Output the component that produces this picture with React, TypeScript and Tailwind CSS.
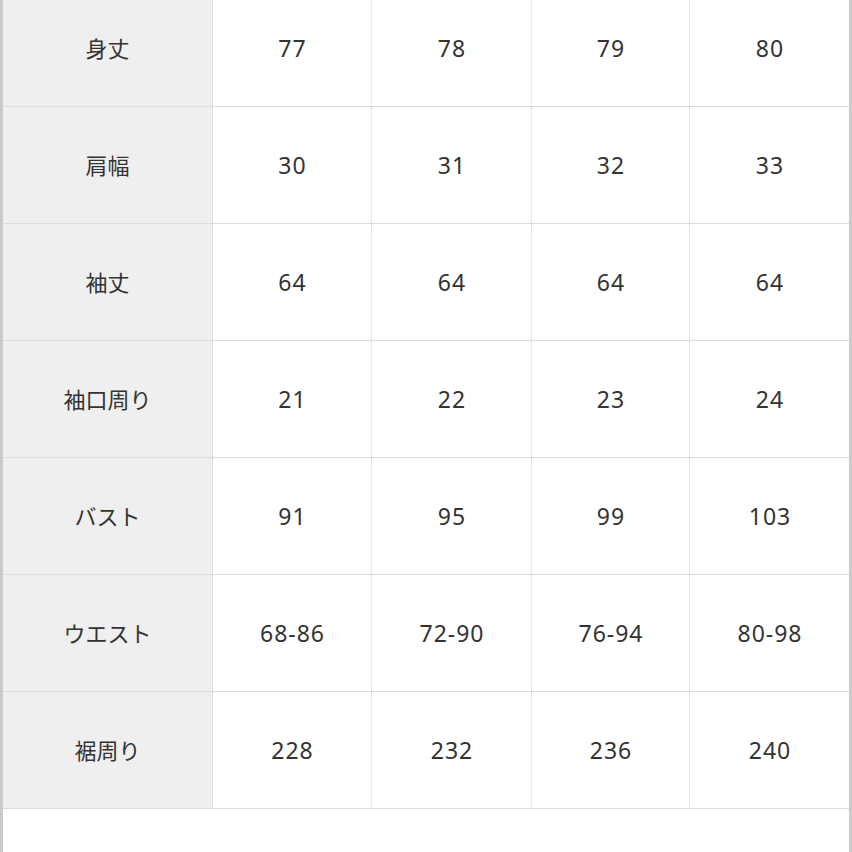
import React from "react";

const rows: [string, string[]][] = [
  ["身丈", ["77", "78", "79", "80"]],
  ["肩幅", ["30", "31", "32", "33"]],
  ["袖丈", ["64", "64", "64", "64"]],
  ["袖口周り", ["21", "22", "23", "24"]],
  ["バスト", ["91", "95", "99", "103"]],
  ["ウエスト", ["68-86", "72-90", "76-94", "80-98"]],
  ["裾周り", ["228", "232", "236", "240"]],
];

const widths = ["w-[159px]", "w-[160px]", "w-[158px]", "w-[159px]"];

export default function App() {
  return (
    <div
      className="w-[852px] h-[852px] overflow-hidden bg-white border-l-[3px] border-r-[3px] border-[#cacaca] text-[#333] text-[22px]"
      style={{ fontFamily: '"Noto Sans", "Noto Sans CJK JP", sans-serif' }}
    >
      <div className="-mt-[10px] flex flex-col">
        {rows.map(([label, vals], i) => (
          <div key={i} className="flex h-[117px] border-b border-[#dcdcdc]">
            <div className="w-[210px] bg-[#efefef] flex items-center justify-center border-r border-dotted border-[#cfcfcf]">
              {label}
            </div>
            {vals.map((v, j) => (
              <div
                key={j}
                className={`${widths[j]} flex items-center justify-center text-[23px] tracking-[1px] pl-[1px] ${j < 3 ? "border-r border-dotted border-[#d4d4d4]" : ""}`}
              >
                {v}
              </div>
            ))}
          </div>
        ))}
      </div>
    </div>
  );
}
